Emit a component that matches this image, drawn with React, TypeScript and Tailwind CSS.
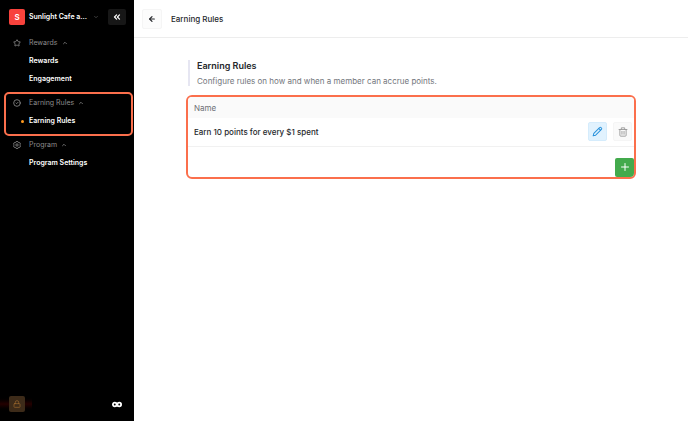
import type { ReactNode } from 'react';
import { ArrowLeft, ChevronDown, ChevronUp, ChevronsLeft, CircleCheck, Lock, Plus, Star } from 'lucide-react';

type NavGroup = {
  label: string;
  icon: ReactNode;
  items: string[];
  highlighted?: boolean;
};

const NAV: NavGroup[] = [
  { label: 'Rewards', icon: <Star className="w-2 h-2" strokeWidth={2.5} />, items: ['Rewards', 'Engagement'] },
  { label: 'Earning Rules', icon: <CircleCheck className="w-2 h-2" strokeWidth={2.5} />, items: ['Earning Rules'], highlighted: true },
  { label: 'Program', icon: <HexGear />, items: ['Program Settings'] },
];

const RULES = [{ id: 1, name: 'Earn 10 points for every $1 spent' }];

function HexGear() {
  return (
    <svg viewBox="0 0 24 24" className="w-2 h-2" fill="none" stroke="currentColor" strokeWidth="2.5" strokeLinejoin="round">
      <path d="M9.500 1.500h5l1 2.500 2 1.200 2.700-.4 2.500 4.300-1.700 2.100v1.600l1.700 2.100-2.500 4.300-2.700-.4-2 1.200-1 2.500h-5l-1-2.500-2-1.200-2.700.4-2.500-4.300L3 12.800v-1.600L1.300 9.100l2.500-4.300 2.700.4 2-1.200z" />
      <circle cx="12" cy="12" r="3.500" />
    </svg>
  );
}

function PencilIcon() {
  return (
    <svg viewBox="0 0 24 24" className="h-[11px] w-[11px]" fill="none" stroke="currentColor" strokeWidth="2.200" strokeLinecap="round" strokeLinejoin="round">
      <path d="M2.500 21.500l1.500-5.500L16.500 3.500a2.200 2.200 0 0 1 3.200 0l.8.8a2.200 2.200 0 0 1 0 3.200L8 20z" />
      <path d="M15 5.500l3.500 3.500" />
    </svg>
  );
}

function TrashIcon() {
  return (
    <svg viewBox="0 0 24 24" className="h-[10px] w-[10px]" fill="none" stroke="currentColor" strokeWidth="2.200" strokeLinecap="round" strokeLinejoin="round">
      <path d="M2.500 6h19M8 6V2h8v4M4.500 6v14a2 2 0 0 0 2 2h11a2 2 0 0 0 2-2V6M9.500 10.500v7M14.500 10.500v7" />
    </svg>
  );
}

function Sidebar() {
  return (
    <aside className="flex w-[134px] shrink-0 flex-col bg-black text-white">
      <div className="flex items-center pt-[9px] pl-[9px] pr-2">
        <span className="flex h-4 w-4 items-center justify-center rounded-xs bg-[#f8423c] text-[8px] font-semibold">S</span>
        <button className="ml-1 flex flex-1 items-center justify-between pr-[9px] text-[7px] font-semibold whitespace-nowrap">
          Sunlight Cafe a...
          <ChevronDown className="h-1.5 w-1.5 text-[#777]" />
        </button>
        <button aria-label="Collapse sidebar" className="flex h-4 w-[18px] items-center justify-center rounded-xs bg-[#171717]">
          <ChevronsLeft className="h-2.5 w-2.5" strokeWidth={3} />
        </button>
      </div>

      <nav className="mt-[9px] flex flex-col gap-1.5">
        {NAV.map((group) => (
          <div key={group.label} className="relative">
            <button className="flex h-[18px] w-full items-center pl-[13px] text-[7px] text-[#8c8c8c]">
              {group.icon}
              <span className="ml-2">{group.label}</span>
              <ChevronUp className="ml-1 h-1.5 w-1.5" strokeWidth={3} />
            </button>
            {group.items.map((item) => (
              <a key={item} href="#" className="flex h-[18px] items-center pl-[21px] text-[7px] font-semibold">
                <span className={`mr-[5px] h-[3px] w-[3px] rounded-full ${group.highlighted ? 'bg-[#ff9a1f]' : ''}`} />
                {item}
              </a>
            ))}
            {group.highlighted && (
              <div className="pointer-events-none absolute -top-0.5 -bottom-1.5 left-1 right-px rounded-[5px] border-2 border-[#fb6f4c]" />
            )}
          </div>
        ))}
      </nav>

      <div className="mt-auto flex items-center justify-between pb-[9px] pr-3">
        <div className="flex h-4 w-8 items-center bg-linear-to-b from-black via-[#240000] to-black pl-[9px]">
          <button aria-label="Lock" className="flex h-4 w-4 items-center justify-center rounded-xs bg-[#3d2b19] text-[#9f6a2e]">
            <Lock className="h-2 w-2" />
          </button>
        </div>
        <svg viewBox="0 0 20 14" className="h-[7px] w-[10px]" fill="none" stroke="white" strokeWidth="3.600">
          <circle cx="5.500" cy="7" r="3.700" />
          <circle cx="14.500" cy="7" r="3.700" />
          <path d="M8 4.500h4M8 9.500h4" strokeWidth="2.500" />
        </svg>
      </div>
    </aside>
  );
}

export default function App() {
  return (
    <div className="flex min-h-screen bg-white font-['Inter',sans-serif] text-[#25272b]">
      <Sidebar />
      <main className="min-w-0 flex-1">
        <header className="flex h-[38px] items-center gap-[9px] border-b border-[#ededed] pl-2">
          <button aria-label="Back" className="flex h-5 w-5 items-center justify-center rounded-xs border border-[#f5f5f5] bg-[#fcfcfc]">
            <ArrowLeft className="h-2 w-2" strokeWidth={3.5} />
          </button>
          <h1 className="text-[8px] font-medium">Earning Rules</h1>
        </header>

        <div className="mx-auto mt-[22px] max-w-[450px]">
          <div className="ml-0.5 border-l-2 border-[#e6e6f2] pl-[7px]">
            <h2 className="text-[9px] leading-3 font-semibold">Earning Rules</h2>
            <p className="mt-1 text-[8px] leading-[10px] text-[#73767c]">Configure rules on how and when a member can accrue points.</p>
          </div>

          <section className="mt-[9px] overflow-hidden rounded-md border-2 border-[#fb6f4c]">
            <table className="w-full text-left text-[8px]">
              <thead>
                <tr className="h-[21px] bg-[#fafafa] text-[#6c6f75]">
                  <th className="pl-1.5 font-normal">Name</th>
                  <th aria-label="Actions" />
                </tr>
              </thead>
              <tbody>
                {RULES.map((rule) => (
                  <tr key={rule.id} className="h-7 border-b border-[#f1f1f1]">
                    <td className="pl-1.5 font-medium">{rule.name}</td>
                    <td>
                      <div className="flex justify-end gap-1.5 pr-0.5">
                        <button aria-label="Edit rule" className="flex h-[19px] w-[19px] items-center justify-center rounded-xs border border-[#d5ecfc] bg-[#e1f2fe] text-[#2a93dc]">
                          <PencilIcon />
                        </button>
                        <button aria-label="Delete rule" className="flex h-[19px] w-[19px] items-center justify-center rounded-xs border border-[#f5f5f5] bg-[#fafafa] text-[#999]">
                          <TrashIcon />
                        </button>
                      </div>
                    </td>
                  </tr>
                ))}
              </tbody>
            </table>
            <div className="mt-[11px] flex justify-end">
              <button aria-label="Add rule" className="flex h-[19px] w-[19px] items-center justify-center rounded-xs bg-[#43aa4c] text-white">
                <Plus className="h-3 w-3" />
              </button>
            </div>
          </section>
        </div>
      </main>
    </div>
  );
}
